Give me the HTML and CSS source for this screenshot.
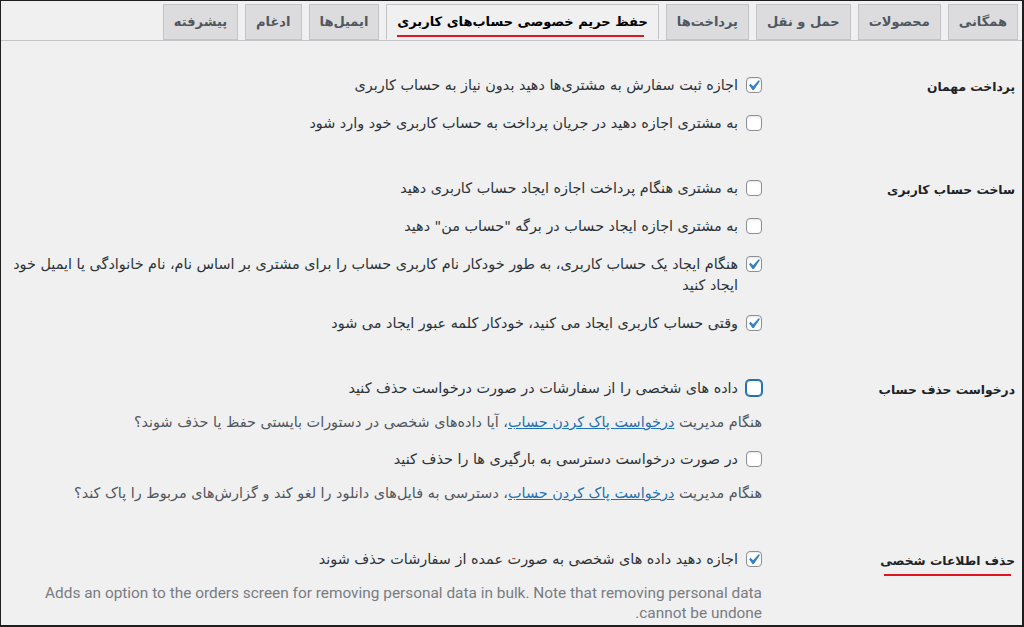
FILE: index.html
```html
<!DOCTYPE html>
<html lang="fa" dir="rtl">
<head>
<meta charset="utf-8">
<title>تنظیمات</title>
<link rel="stylesheet" href="styles.css">
</head>
<body>
<div class="frame">
  <nav class="tabs">
    <a class="tab">همگانی</a>
    <a class="tab">محصولات</a>
    <a class="tab">حمل و نقل</a>
    <a class="tab">پرداخت‌ها</a>
    <a class="tab active"><span class="mark">حفظ حریم خصوصی حساب‌های کاربری</span></a>
    <a class="tab">ایمیل‌ها</a>
    <a class="tab">ادغام</a>
    <a class="tab">پیشرفته</a>
  </nav>

  <div class="form">
    <div class="row">
      <div class="th">پرداخت مهمان</div>
      <div class="td">
        <div class="opt">
          <label class="cb-line"><span class="cb checked"><svg viewBox="0 0 20 20"><path d="M14.83 4.89l1.34.94-5.81 8.38H9.02L5.78 9.67l1.34-1.25 2.570 2.4z"/></svg></span><span class="txt">اجازه ثبت سفارش به مشتری‌ها دهید بدون نیاز به حساب کاربری</span></label>
        </div>
        <div class="opt">
          <label class="cb-line"><span class="cb"></span><span class="txt">به مشتری اجازه دهید در جریان پرداخت به حساب کاربری خود وارد شود</span></label>
        </div>
      </div>
    </div>

    <div class="row">
      <div class="th">ساخت حساب کاربری</div>
      <div class="td">
        <div class="opt">
          <label class="cb-line"><span class="cb"></span><span class="txt">به مشتری هنگام پرداخت اجازه ایجاد حساب کاربری دهید</span></label>
        </div>
        <div class="opt">
          <label class="cb-line"><span class="cb"></span><span class="txt">به مشتری اجازه ایجاد حساب در برگه "حساب من" دهید</span></label>
        </div>
        <div class="opt">
          <label class="cb-line"><span class="cb checked"><svg viewBox="0 0 20 20"><path d="M14.83 4.89l1.34.94-5.81 8.38H9.02L5.78 9.67l1.34-1.25 2.57 2.4z"/></svg></span><span class="txt">هنگام ایجاد یک حساب کاربری، به طور خودکار نام کاربری حساب را برای مشتری بر اساس نام، نام خانوادگی یا ایمیل خود ایجاد کنید</span></label>
        </div>
        <div class="opt">
          <label class="cb-line"><span class="cb checked"><svg viewBox="0 0 20 20"><path d="M14.83 4.89l1.34.94-5.81 8.38H9.02L5.78 9.67l1.34-1.25 2.57 2.4z"/></svg></span><span class="txt">وقتی حساب کاربری ایجاد می کنید، خودکار کلمه عبور ایجاد می شود</span></label>
        </div>
      </div>
    </div>

    <div class="row">
      <div class="th">درخواست حذف حساب</div>
      <div class="td">
        <div class="opt">
          <label class="cb-line"><span class="cb focus"></span><span class="txt">داده های شخصی را از سفارشات در صورت درخواست حذف کنید</span></label>
          <p class="desc">هنگام مدیریت <a class="link">درخواست پاک کردن حساب</a>، آیا داده‌های شخصی در دستورات بایستی حفظ یا حذف شوند؟</p>
        </div>
        <div class="opt">
          <label class="cb-line"><span class="cb"></span><span class="txt">در صورت درخواست دسترسی به بارگیری ها را حذف کنید</span></label>
          <p class="desc">هنگام مدیریت <a class="link">درخواست پاک کردن حساب</a>، دسترسی به فایل‌های دانلود را لغو کند و گزارش‌های مربوط را پاک کند؟</p>
        </div>
      </div>
    </div>

    <div class="row last">
      <div class="th"><span class="mark2">حذف اطلاعات شخصی</span></div>
      <div class="td">
        <div class="opt">
          <label class="cb-line"><span class="cb checked"><svg viewBox="0 0 20 20"><path d="M14.83 4.89l1.34.94-5.81 8.38H9.02L5.78 9.67l1.34-1.25 2.57 2.4z"/></svg></span><span class="txt">اجازه دهید داده های شخصی به صورت عمده از سفارشات حذف شوند</span></label>
          <p class="desc en">Adds an option to the orders screen for removing personal data in bulk. Note that removing personal data cannot be undone.</p>
        </div>
      </div>
    </div>
  </div>
</div>
</body>
</html>
```

FILE: styles.css
```css
html, body {
  margin: 0;
  padding: 0;
  background: #f0f0f1;
}

body {
  font-family: "DejaVu Sans", "Noto Sans", sans-serif;
  color: #1d2327;
  font-size: 14px;
}

.frame {
  width: 1024px;
  height: 627px;
  box-sizing: border-box;
  border: 1px solid #1e1e1e;
  border-right-width: 2px;
  border-bottom-width: 2px;
  overflow: hidden;
  background: #f0f0f1;
  direction: rtl;
}

.tabs {
  display: flex;
  gap: 7px;
  padding: 3px 4px 0 0;
  border-bottom: 1px solid #c3c4c7;
  height: 36px;
}

.tab {
  display: block;
  height: 24px;
  padding: 5px 10px;
  border: 1px solid #c3c4c7;
  background: #dcdcde;
  color: #50575e;
  font-size: 13px;
  font-weight: 700;
  line-height: 24px;
  white-space: nowrap;
  margin-bottom: -1px;
}

.tab.active {
  background: #f0f0f1;
  border-bottom-color: #f0f0f1;
  color: #000;
}

.mark, .mark2 {
  position: relative;
  display: inline-block;
}

.mark::after {
  content: "";
  position: absolute;
  left: 0;
  right: 4px;
  bottom: -3px;
  height: 2px;
  background: #e0151f;
}

.mark2::after {
  content: "";
  position: absolute;
  left: 4px;
  right: 4px;
  bottom: -4px;
  height: 2px;
  background: #e0151f;
}

.form {
  margin-top: 12px;
  padding-right: 7px;
}

.row {
  display: grid;
  grid-template-columns: 243px 1fr;
  padding: 22px 0 22px;
}

.row.last {
  padding-top: 24px;
}

.th {
  font-size: 12.3px;
  font-weight: 700;
  line-height: 21px;
  color: #1d2327;
  padding-top: 2px;
}

.td {
  padding: 0 10px 0 6px;
  display: flex;
  flex-direction: column;
  gap: 17px;
}

.cb-line {
  display: flex;
  align-items: flex-start;
  gap: 8px;
  line-height: 21px;
  font-size: 14.4px;
  color: #2c3338;
}

.cb {
  flex: none;
  position: relative;
  width: 14px;
  height: 14px;
  margin-top: 2px;
  border: 1px solid #8c8f94;
  border-radius: 4px;
  background: #fff;
  box-shadow: inset 0 1px 2px rgba(0, 0, 0, 0.1);
}

.cb svg {
  position: absolute;
  left: -4px;
  top: -3px;
  width: 21px;
  height: 21px;
  fill: #3582c4;
}

.cb.focus {
  border-color: #2271b1;
  box-shadow: 0 0 0 1px #2271b1;
}

.desc {
  margin: 13px 0 0;
  font-size: 14.4px;
  line-height: 20px;
  color: #50575e;
}

.desc.en {
  font-family: Roboto, "DejaVu Sans", sans-serif;
  font-size: 15.4px;
  color: #787c82;
}

.link {
  color: #2271b1;
  text-decoration: underline;
}
```
